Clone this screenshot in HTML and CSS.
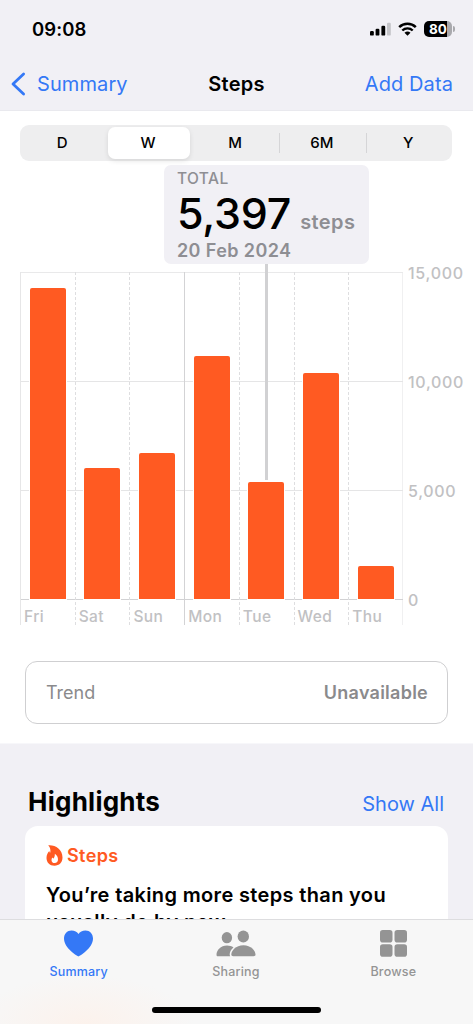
FILE: index.html
```html
<!DOCTYPE html>
<html lang="en">
<head>
    <meta charset="UTF-8">
    <meta name="viewport" content="width=device-width, initial-scale=1.0">
    <title>Steps</title>
    <link rel="stylesheet" href="styles.css">
</head>
<body>
    <div class="screen">
        <header class="header">
            <div class="status-bar">
                <span class="time">09:08</span>
                <div class="status-icons">
                    <svg class="signal" width="21" height="14" viewBox="0 0 21 14">
                        <rect x="0" y="9" width="3.8" height="4.6" rx="1.2"/>
                        <rect x="5.6" y="6.8" width="3.8" height="6.8" rx="1.2"/>
                        <rect x="11.4" y="3.8" width="3.8" height="9.8" rx="1.2"/>
                        <rect x="17" y="0.8" width="3.8" height="12.8" rx="1.2" fill="#c4c4c8"/>
                    </svg>
                    <svg class="wifi" width="19" height="14" viewBox="0 0 19 14">
                        <path d="M1.2 5.2A12 12 0 0 1 17.8 5.2" fill="none" stroke="#000" stroke-width="2.5"/>
                        <path d="M4.3 8.5A7.5 7.5 0 0 1 14.7 8.5" fill="none" stroke="#000" stroke-width="2.4"/>
                        <path d="M6.5 10.8a4.4 4.4 0 0 1 6 0L9.5 13.8z"/>
                    </svg>
                    <div class="battery">80</div>
                </div>
            </div>
            <nav class="nav-bar">
                <a class="back">
                    <svg width="15" height="24" viewBox="0 0 15 24">
                        <path d="M12.6 2L2 12l10.6 10" fill="none" stroke="#3478f6" stroke-width="2.8" stroke-linecap="round" stroke-linejoin="round"/>
                    </svg>
                    <span>Summary</span>
                </a>
                <h1>Steps</h1>
                <a class="add">Add Data</a>
            </nav>
        </header>

        <main class="content">
            <div class="segmented">
                <span>D</span>
                <span class="selected">W</span>
                <span>M</span>
                <span class="divided">6M</span>
                <span class="divided">Y</span>
            </div>

            <div class="callout">
                <div class="callout-label">TOTAL</div>
                <div class="callout-value">5,397 <small>steps</small></div>
                <div class="callout-date">20 Feb 2024</div>
            </div>

            <div class="chart">
                <div class="plot">
                    <div class="day"><div class="track"><div class="bar" style="height: 311px"></div></div><span>Fri</span></div>
                    <div class="day dashed"><div class="track"><div class="bar" style="height: 131px"></div></div><span>Sat</span></div>
                    <div class="day dashed"><div class="track"><div class="bar" style="height: 146px"></div></div><span>Sun</span></div>
                    <div class="day week-start"><div class="track"><div class="bar" style="height: 243px"></div></div><span>Mon</span></div>
                    <div class="day dashed"><div class="track"><div class="bar" style="height: 117px"></div><div class="marker"></div></div><span>Tue</span></div>
                    <div class="day dashed"><div class="track"><div class="bar" style="height: 226px"></div></div><span>Wed</span></div>
                    <div class="day dashed"><div class="track"><div class="bar" style="height: 33px"></div></div><span>Thu</span></div>
                </div>
                <div class="scale">
                    <span>15,000</span>
                    <span>10,000</span>
                    <span>5,000</span>
                    <span>0</span>
                </div>
            </div>

            <div class="trend">
                <span class="trend-name">Trend</span>
                <span class="trend-value">Unavailable</span>
            </div>
        </main>

        <section class="highlights">
            <div class="section-head">
                <h2>Highlights</h2>
                <a class="show-all">Show All</a>
            </div>
            <div class="card">
                <div class="card-type">
                    <svg width="17" height="21" viewBox="0 0 17 21">
                        <path fill="#ff5a22" d="M2.2 .3C9 -.4 16.500 4.300 16.500 12.500C16.500 17.500 13.200 20.700 8.500 20.700C3.700 20.700 .5 17.500 .5 13C.5 10 1.700 7.600 3.400 6C3.500 7 3.700 7.500 4.200 7.800C4.800 5 4.200 2.300 2.200 .3Z"/>
                        <path fill="#fff" d="M8.800 8.800C11 10.500 12 12.200 12 14.300C12 16.800 10.700 18 8.700 18C6.700 18 5.500 16.800 5.500 14.900C5.500 13.900 5.900 13 6.500 12.400C6.800 13 7.200 13.300 7.700 13.400C8.500 12 9 10.400 8.800 8.800Z"/>
                    </svg>
                    <span>Steps</span>
                </div>
                <p class="card-text">You’re taking more steps than you<br>usually do by now.</p>
            </div>
        </section>

        <footer class="tab-bar">
            <div class="tabs">
                <div class="tab active">
                    <svg width="29" height="27" viewBox="0 0 29 27">
                        <path d="M14.5 26.5C13.7 26.5 0 18.3 0 8.6C0 3.9 3.2 .5 7.5 .5C10.7 .5 13.1 1.800 14.5 4C15.9 1.800 18.3 .5 21.5 .5C25.8 .5 29 3.9 29 8.6C29 18.3 15.3 26.5 14.5 26.5Z"/>
                    </svg>
                    <span>Summary</span>
                </div>
                <div class="tab">
                    <svg width="40" height="27" viewBox="0 0 40 27">
                        <ellipse cx="10.9" cy="7.7" rx="5.2" ry="5.6"/>
                        <ellipse cx="27.3" cy="6.5" rx="5.7" ry="6.1"/>
                        <path d="M2 26.3C1 26.3 .5 25.8 .5 24.8C.5 20.2 4.7 15.5 11 15.5C13.5 15.5 15.7 16.2 17.5 17.4C15.2 19.2 13.6 22 13.7 24.6C13.7 25.3 13.9 25.9 14.2 26.3Z"/>
                        <path d="M17.3 26.3C16 26.3 15.3 25.7 15.3 24.6C15.3 20.8 19.7 15.3 27.4 15.3C35 15.3 39.5 20.8 39.5 24.6C39.5 25.7 38.8 26.3 37.5 26.3Z"/>
                    </svg>
                    <span>Sharing</span>
                </div>
                <div class="tab">
                    <svg width="27" height="27" viewBox="0 0 27 27">
                        <rect x="0" y="0" width="12.5" height="12.5" rx="2.8"/>
                        <rect x="14.5" y="0" width="12.5" height="12.5" rx="2.8"/>
                        <rect x="0" y="14.2" width="12.5" height="12.5" rx="2.8"/>
                        <rect x="14.5" y="14.2" width="12.5" height="12.5" rx="2.8"/>
                    </svg>
                    <span>Browse</span>
                </div>
            </div>
            <div class="home-indicator"></div>
        </footer>
    </div>
</body>
</html>
```
FILE: styles.css
```css
* {
    box-sizing: border-box;
}
body {
    margin: 0;
    font-family: Inter, "Liberation Sans", sans-serif;
    color: #000;
    background: #f1f0f5;
}
.screen {
    position: relative;
    width: 473px;
    height: 1024px;
    overflow: hidden;
}
h1, h2, p {
    margin: 0;
}
svg {
    display: block;
}

/* Header */
.header {
    height: 111px;
    border-bottom: 1px solid #e9e9ee;
}
.status-bar {
    display: flex;
    justify-content: space-between;
    align-items: center;
    height: 58px;
    padding: 0 20px 0 32px;
}
.time {
    font-size: 18.5px;
    font-weight: 600;
    letter-spacing: 0.1px;
}
.status-icons {
    display: flex;
    align-items: center;
    gap: 7px;
}
.battery {
    position: relative;
    width: 28px;
    height: 16px;
    border-radius: 5px;
    background: linear-gradient(to right, #000 82%, #a9a9ad 82%);
    color: #fff;
    font-size: 13.5px;
    font-weight: 700;
    line-height: 16px;
    text-align: center;
    margin-right: 1px;
}
.battery::after {
    content: "";
    position: absolute;
    right: -3px;
    top: 5px;
    width: 2px;
    height: 6px;
    border-radius: 0 2px 2px 0;
    background: #a9a9ad;
}
.nav-bar {
    display: grid;
    grid-template-columns: 1fr auto 1fr;
    align-items: center;
    height: 51px;
    padding: 0 20px 0 20px;
    color: #3478f6;
    font-size: 20px;
    letter-spacing: 0.1px;
}
.back {
    display: flex;
    align-items: center;
    gap: 11px;
    margin-left: -9px;
}
.nav-bar h1 {
    color: #000;
    font-size: 20px;
    font-weight: 600;
    letter-spacing: 0.3px;
}
.add {
    text-align: right;
}

/* Chart */
.content {
    height: 633px;
    padding-top: 14px;
    background: #fff;
    border-bottom: 1px solid #f7f7fa;
}
.segmented {
    display: grid;
    grid-template-columns: repeat(5, 1fr);
    align-items: center;
    height: 36px;
    margin: 0 21px 0 20px;
    border-radius: 9px;
    background: #eeeeef;
    font-size: 15px;
    font-weight: 500;
    text-align: center;
}
.segmented span {
    padding-right: 2px;
    line-height: 20px;
}
.segmented .selected {
    margin: 0 3px 0 2px;
    line-height: 32px;
    border-radius: 7px;
    background: #fff;
    box-shadow: 0 2px 5px rgba(0,0,0,0.1);
}
.segmented .divided {
    border-left: 1px solid #d5d5d7;
}
.callout {
    width: 205px;
    height: 99px;
    margin: 4px 0 0 164px;
    padding: 5px 13px;
    border-radius: 7px;
    background: #f1f0f5;
    color: #8e8e93;
    font-weight: 600;
}
.callout-label {
    font-size: 15.5px;
    font-weight: 500;
    line-height: 17px;
    letter-spacing: 0.4px;
}
.callout-value {
    display: flex;
    align-items: baseline;
    gap: 9px;
    height: 54px;
    color: #000;
    font-size: 43px;
    font-weight: 500;
    line-height: 52px;
    letter-spacing: -0.2px;
    white-space: nowrap;
}
.callout-value small {
    color: #8e8e93;
    font-size: 20px;
    font-weight: 600;
    letter-spacing: 0.4px;
}
.callout-date {
    font-size: 18px;
    line-height: 20px;
    letter-spacing: 0.4px;
}
.chart {
    display: flex;
    margin: 8px 0 0 20px;
}
.plot {
    display: grid;
    grid-template-columns: repeat(7, 1fr);
    width: 383px;
    height: 353px;
    background:
        linear-gradient(#e6e6e7, #e6e6e7) 0 0 / 1px 100% no-repeat,
        linear-gradient(#e9e9ea, #e9e9ea) 0 0 / 100% 1px no-repeat,
        linear-gradient(#e5e5e6, #e5e5e6) 0 109px / 100% 1px no-repeat,
        linear-gradient(#e5e5e6, #e5e5e6) 0 218px / 100% 1px no-repeat,
        linear-gradient(#d2d2d4, #d2d2d4) 0 327px / 100% 1px no-repeat,
        linear-gradient(#f0f0f1, #f0f0f1) 100% 0 / 1px 100% no-repeat;
}
.day {
    color: #c1c1c3;
    font-size: 15.5px;
    font-weight: 500;
    letter-spacing: 0.4px;
}
.dashed {
    background: repeating-linear-gradient(#dedee0 0 3px, transparent 3px 5px) 0 0 / 1px 100% no-repeat;
}
.week-start {
    background: linear-gradient(#d3d3d5, #d3d3d5) 0 0 / 1px 100% no-repeat;
}
.day span {
    display: block;
    height: 26px;
    padding-left: 4px;
    line-height: 35px;
}
.track {
    position: relative;
    display: flex;
    align-items: flex-end;
    height: 327px;
    padding-left: 9.5px;
}
.bar {
    width: 36px;
    border-radius: 2px 2px 0 0;
    background: #ff5a22;
    box-shadow: 0 0 0 1px #fff;
}
.marker {
    position: absolute;
    left: 26px;
    top: -8px;
    width: 3px;
    height: 216px;
    background: #d1d1d3;
}
.scale {
    display: flex;
    flex-direction: column;
    gap: 89px;
    margin: -9px 0 0 5px;
    color: #c1c1c3;
    font-size: 16px;
    font-weight: 500;
    letter-spacing: 0.7px;
    line-height: 20px;
}
.trend {
    display: flex;
    justify-content: space-between;
    align-items: center;
    height: 63px;
    margin: 36px 25px 0;
    padding: 0 19px 0 20px;
    border: 1px solid #cfcfd1;
    border-radius: 12px;
    color: #8a8a8c;
    font-size: 18px;
}
.trend-value {
    font-weight: 600;
    letter-spacing: 0.25px;
}

/* Highlights */
.highlights {
    padding: 42px 25px 0;
}
.section-head {
    display: flex;
    justify-content: space-between;
    align-items: center;
    height: 32px;
    margin-bottom: 8px;
    padding: 0 4px 0 3px;
}
.section-head h2 {
    margin-top: -2px;
    font-size: 26px;
    font-weight: 700;
    letter-spacing: 0.25px;
}
.show-all {
    padding-top: 3px;
    color: #3478f6;
    font-size: 20px;
}
.card {
    height: 240px;
    padding: 19px 21px;
    border-radius: 13px;
    background: #fff;
}
.card-type {
    display: flex;
    align-items: center;
    gap: 4px;
    height: 21px;
    color: #ff5a22;
    font-size: 18px;
    font-weight: 600;
    letter-spacing: 0.4px;
}
.card-text {
    margin-top: 16px;
    font-size: 20px;
    font-weight: 600;
    line-height: 27px;
    letter-spacing: 0.35px;
    white-space: nowrap;
}

/* Tab bar */
.tab-bar {
    position: absolute;
    left: 0;
    right: 0;
    bottom: 0;
    height: 105px;
    border-top: 1px solid #dddddf;
    background: radial-gradient(ellipse 110px 50px at 85px 105px, #fcf2ec, transparent), #f7f7f7;
}
.tabs {
    display: grid;
    grid-template-columns: repeat(3, 1fr);
    height: 87px;
    padding: 10px 1px 0 0;
}
.tab {
    display: flex;
    flex-direction: column;
    align-items: center;
    gap: 7px;
    color: #949494;
    fill: #949494;
    font-size: 12.5px;
    font-weight: 500;
    line-height: 16px;
    letter-spacing: 0.2px;
}
.tab.active {
    color: #3478f6;
    fill: #3478f6;
}
.home-indicator {
    width: 169px;
    height: 6px;
    margin: 0 auto;
    border-radius: 3px;
    background: #000;
}
```
